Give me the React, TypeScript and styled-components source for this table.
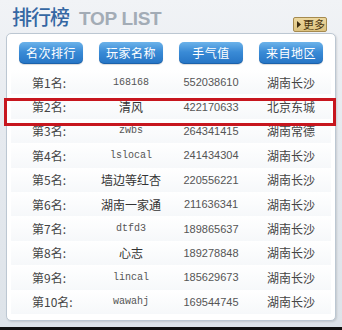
import React from 'react'
import styled, { createGlobalStyle } from 'styled-components'

const GlobalStyle = createGlobalStyle`
  html, body {
    margin: 0;
    padding: 0;
    background: #e4e9ee;
  }
`

const Wrapper = styled.div`
  position: relative;
  width: 342px;
  height: 327px;
  background: linear-gradient(180deg, #f1f3f6 0%, #e6eaef 40%, #dde3e9 100%);
  border-bottom: 3px solid #111;
  font-family: 'Noto Sans CJK SC', 'Liberation Sans', sans-serif;
`

const TitleBar = styled.div`
  display: flex;
  align-items: flex-start;
  justify-content: space-between;
  height: 33px;
  padding: 0 15px 0 12px;
  box-sizing: border-box;
`

const Title = styled.div`
  display: flex;
  align-items: baseline;
  padding-top: 5px;

  .cn {
    font-size: 20px;
    line-height: 24px;
    font-weight: 500;
    color: #3567a3;
    letter-spacing: -1px;
  }

  .en {
    margin-left: 10px;
    font-family: 'Liberation Sans', Arial, sans-serif;
    font-weight: bold;
    font-size: 19px;
    color: #a3acb6;
    letter-spacing: -0.3px;
  }
`

const MoreButton = styled.a`
  display: flex;
  align-items: center;
  margin-top: 17px;
  height: 15px;
  width: 34px;
  box-sizing: border-box;
  padding: 0 0 0 3px;
  background: linear-gradient(180deg, #ecd79f, #dcc27f);
  border: 1px solid #a58a4f;
  border-radius: 2px;
  color: #4a3510;
  font-size: 11px;
  line-height: 13px;
  white-space: nowrap;
  overflow: hidden;
  cursor: pointer;

  svg {
    flex: none;
    margin-right: 2px;
  }
`

const Panel = styled.div`
  margin: 0 6px;
  height: 288px;
  box-sizing: border-box;
  background: #fff;
  border: 1px solid #bcc7d2;
  border-radius: 5px;
  box-shadow: 1px 1px 2px rgba(0, 0, 0, 0.12);
  padding: 8px 4px 0;
`

const Grid = styled.div`
  display: grid;
  grid-template-columns: repeat(4, 80px);
`

const HeadRow = styled(Grid)`
  margin-bottom: 6px;
`

const HeadButton = styled.div`
  justify-self: center;
  width: 64px;
  height: 22px;
  border-radius: 5px;
  background: linear-gradient(180deg, #6cb3ea 0%, #3a8bd6 45%, #2574c4 100%);
  box-shadow: inset 0 -1px 0 rgba(10, 60, 120, 0.35), 0 1px 1px rgba(0, 0, 0, 0.15);
  color: #fff;
  font-size: 12px;
  line-height: 22px;
  text-align: center;
  letter-spacing: 0.5px;
`

const Row = styled(Grid)`
  height: 24.4px;
  align-items: center;
  background: linear-gradient(180deg, #ffffff 0%, #f6f8fa 100%);
  color: #444;
`

const Rank = styled.div`
  padding-left: 21px;
  font-size: 12px;
`

const Name = styled.div<{ $latin: boolean }>`
  text-align: center;
  font-family: ${(p) =>
    p.$latin ? "'Liberation Mono', monospace" : "'Noto Sans CJK SC', sans-serif"};
  font-size: ${(p) => (p.$latin ? '10px' : '12px')};
  color: ${(p) => (p.$latin ? '#555' : '#333')};
`

const Score = styled.div`
  text-align: center;
  font-family: 'Liberation Sans', Arial, sans-serif;
  font-size: 11px;
  color: #555;
`

const Area = styled.div`
  text-align: center;
  font-size: 12px;
  color: #444;
`

const Highlight = styled.div`
  position: absolute;
  left: 4px;
  top: 98px;
  width: 332px;
  height: 28px;
  box-sizing: border-box;
  border: 3px solid #c7161e;
  pointer-events: none;
`

const headers = ['名次排行', '玩家名称', '手气值', '来自地区']

const rows = [
  { name: '168168', score: '552038610', area: '湖南长沙' },
  { name: '清风', score: '422170633', area: '北京东城' },
  { name: 'zwbs', score: '264341415', area: '湖南常德' },
  { name: 'lslocal', score: '241434304', area: '湖南长沙' },
  { name: '墙边等红杏', score: '220556221', area: '湖南长沙' },
  { name: '湖南一家通', score: '211636341', area: '湖南长沙' },
  { name: 'dtfd3', score: '189865637', area: '湖南长沙' },
  { name: '心志', score: '189278848', area: '湖南长沙' },
  { name: 'lincal', score: '185629673', area: '湖南长沙' },
  { name: 'wawahj', score: '169544745', area: '湖南长沙' },
]

const isLatin = (s: string) => /^[\x00-\x7f]+$/.test(s)

export default function App() {
  return (
    <>
      <GlobalStyle />
      <Wrapper>
        <TitleBar>
          <Title>
            <span className="cn">排行榜</span>
            <span className="en">TOP LIST</span>
          </Title>
          <MoreButton>
            <svg width="4" height="7" viewBox="0 0 4 7">
              <path d="M0 0 L4 3.5 L0 7 Z" fill="#3a2a10" />
            </svg>
            更多
          </MoreButton>
        </TitleBar>
        <Panel>
          <HeadRow>
            {headers.map((h) => (
              <HeadButton key={h}>{h}</HeadButton>
            ))}
          </HeadRow>
          {rows.map((r, i) => (
            <Row key={i}>
              <Rank>第{i + 1}名:</Rank>
              <Name $latin={isLatin(r.name)}>{r.name}</Name>
              <Score>{r.score}</Score>
              <Area>{r.area}</Area>
            </Row>
          ))}
        </Panel>
        <Highlight />
      </Wrapper>
    </>
  )
}
